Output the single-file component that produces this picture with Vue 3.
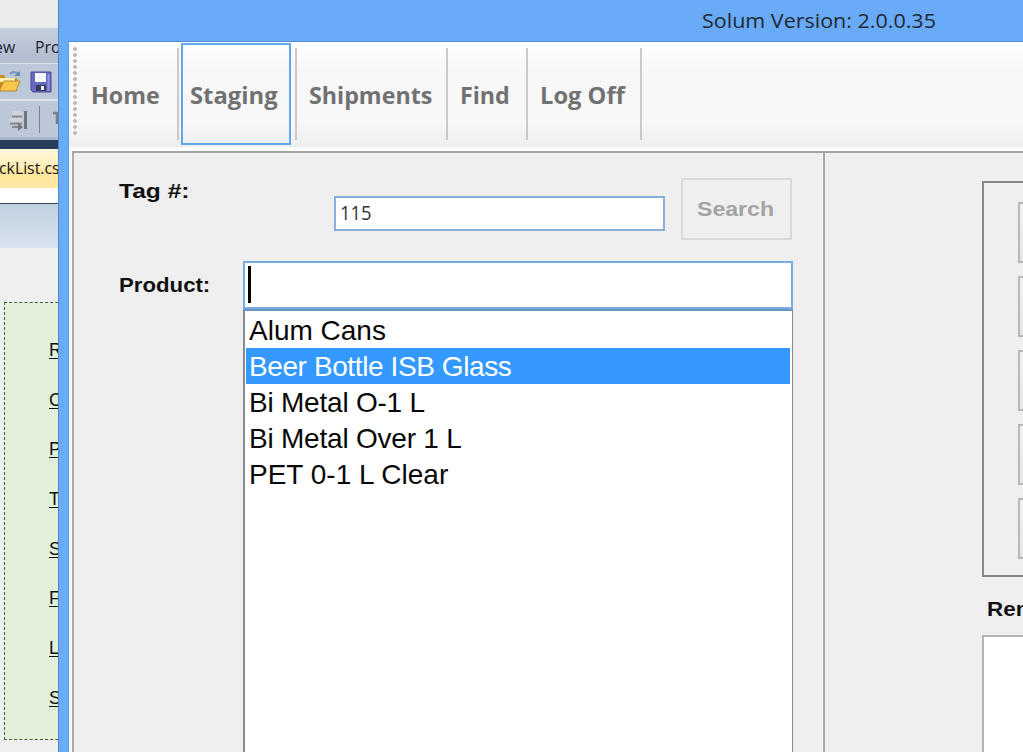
<script setup>
const tabs = [
  { label: 'Home', cls: 'home' },
  { label: 'Staging', cls: 'staging' },
  { label: 'Shipments', cls: 'shipments' },
  { label: 'Find', cls: 'find' },
  { label: 'Log Off', cls: 'logoff' },
]
const products = [
  { name: 'Alum Cans' },
  { name: 'Beer Bottle ISB Glass', cls: 'selected' },
  { name: 'Bi Metal O-1 L', cls: 'tight' },
  { name: 'Bi Metal Over 1 L', cls: 'tight' },
  { name: 'PET 0-1 L Clear' },
]
const links = ['R', 'C', 'P', 'T', 'S', 'F', 'L', 'S']
</script>

<template>
  <div class="desktop">
    <aside class="editor">
      <div class="editor-title"></div>
      <div class="editor-menu"><span class="m1">ew</span><span class="m2">Pro</span></div>
      <div class="editor-bar bar1">
        <svg width="58" height="34" viewBox="0 0 58 34">
          <path d="M0 11H4L6 14H17V27H0Z" fill="#c98f24" />
          <path d="M0 14H15V18H0Z" fill="#fff0b0" />
          <path d="M4 17H20L16 27H0V25Z" fill="#f7c54b" stroke="#a87820" stroke-width=".8" />
          <path d="M10 10Q14 6 18 10" fill="none" stroke="#7897bd" stroke-width="2" />
          <path d="M14 12H20V7Z" fill="#6988b3" />
          <path d="M31 8H51V28H33L31 26Z" fill="#6668bd" stroke="#484d9c" />
          <path d="M35 9H46V18H35Z" fill="#f6f6ff" />
          <path d="M36 21H46V27H36Z" fill="#343a62" />
          <path d="M41 22H44V26H41Z" fill="#f0f1f4" />
          <path d="M48.5 10V27" stroke="#9296e2" stroke-width="2" />
        </svg>
      </div>
      <div class="editor-bar bar2">
        <svg width="58" height="36" viewBox="0 0 58 36">
          <path d="M25.500 10V28" stroke="#72777f" stroke-width="3" />
          <path d="M12 10H22V15H12ZM10 17H22V22H10Z" fill="#d0d3d8" />
          <path d="M12 15.500H22M10 22.500H22M12 26H20" stroke="#858a92" stroke-width="2" />
          <path d="M18 22L23 26L18 30Z" fill="#72777f" />
          <path d="M39.500 5V32" stroke="#7b8492" />
          <path d="M53 12H58M57 12V23" stroke="#7b7f86" stroke-width="2.500" />
        </svg>
      </div>
      <div class="navy"></div>
      <div class="file-tab"><span>ckList.cs</span></div>
      <div class="white-strip"></div>
      <div class="blue-strip"></div>
      <div class="link-panel">
        <span v-for="(l, i) in links" :key="i">{{ l }}</span>
      </div>
    </aside>
    <main class="window">
      <header class="titlebar"><span>Solum Version: 2.0.0.35</span></header>
      <div class="client">
        <nav class="toolbar">
          <i class="grip"></i>
          <div v-for="t in tabs" :key="t.label" class="tab" :class="t.cls"><span>{{ t.label }}</span></div>
        </nav>
        <div class="panels">
          <section class="left">
            <div class="tag-row">
              <label><b class="tag">Tag #:</b></label>
              <div class="input"><span>115</span></div>
              <button><b>Search</b></button>
            </div>
            <div class="product-row">
              <label><b class="prod">Product:</b></label>
              <div class="combo">
                <div class="entry"><i></i></div>
                <ul>
                  <li v-for="p in products" :key="p.name" :class="p.cls">{{ p.name }}</li>
                </ul>
              </div>
            </div>
          </section>
          <section class="right">
            <div class="group"><i v-for="n in 5" :key="n"></i></div>
            <div class="remarks"><b>Rem</b></div>
            <div class="note"></div>
          </section>
        </div>
      </div>
    </main>
  </div>
</template>

<style>
html, body { margin: 0; overflow: hidden; }
</style>
<style scoped>
* { box-sizing: border-box; }
.desktop { display: grid; grid-template-columns: 58px 965px; width: 1023px; height: 752px; overflow: hidden; font-family: "Liberation Sans", Arial, sans-serif; }
span, b { display: inline-block; white-space: nowrap; transform-origin: 0 50%; }
.editor { overflow: hidden; background: #efefef; display: flex; flex-direction: column; }
.editor > div { flex: none; }
.editor-title { height: 28px; background: #ebebeb; }
.editor-menu { height: 35px; background: linear-gradient(#c5cedc, #b0bbcd); font: 17px/37px "Open Sans", sans-serif; color: #1c2230; display: flex; }
.m1 { flex: none; width: 36px; margin-left: -6px; transform: scaleX(.93); }
.m2 { margin-left: 5px; transform: scaleX(.93); }
.editor-bar svg { display: block; }
.bar1 { height: 36px; background: #bcc7d8; border-top: 1px solid #dce2eb; }
.bar2 { height: 41px; background: #bcc7d8; border-top: 2px solid #dbe1e9; border-bottom: 3px solid #a9b6c9; }
.navy { height: 9px; background: #2b3d5d; }
.file-tab { height: 39px; background: linear-gradient(#fff8df, #ffeeb5 48%, #ffe69b 52%, #ffe8a6); font: 17px/38px "Open Sans", sans-serif; color: #151515; }
.file-tab span { margin-left: -1px; transform: scaleX(.93); }
.white-strip { height: 16px; background: #fff; border-bottom: 1px solid #34435c; }
.blue-strip { height: 44px; background: linear-gradient(#bfd0df, #d9e4ef); }
.link-panel { margin: 54px 0 0 4px; width: 80px; height: 438px; border: 1px dashed #4c6343; background: #e2efd9; padding: 37px 0 0 44px; display: flex; flex-direction: column; }
.link-panel span { flex: none; height: 49.7px; font-size: 18px; line-height: 20px; text-decoration: underline; text-decoration-thickness: 1px; text-underline-offset: 2px; color: #111; }
.window { background: #6aabf7; display: flex; flex-direction: column; border-left: 1px solid #5289ca; }
.titlebar { height: 41px; padding-left: 643px; font: 20px/42px "Open Sans", sans-serif; color: #202832; }
.titlebar span { transform: scaleX(1.075); }
.client { height: 711px; margin-left: 9px; border-top: 1px solid #508dd4; border-left: 1px solid #5a9ae8; background: #f7f7f7; }
.toolbar { height: 109px; display: flex; padding-top: 2px; background: linear-gradient(#fff, #f8f8f8 25%, #f7f7f7 75%, #eee 96%, #fff 97%); }
.grip { width: 4px; height: 89px; margin: 3px 0 0 4px; background: radial-gradient(circle at 2px 2px, #bcbcbc 1.6px, transparent 2px) 0 0 / 4px 6px; }
.tab { height: 92px; margin-top: 4px; border-right: 2px solid #c9c9c9; font: 700 23px/94px "Open Sans", sans-serif; color: #717171; }
.tab span { transform: scaleX(1.01); }
.home { width: 102px; padding-left: 14px; }
.staging { width: 110px; height: 102px; margin: -1px 4px 0 2px; padding-left: 7px; border: 2px solid #5fa8ef; line-height: 101px; }
.staging span { transform: scaleX(1.035); }
.shipments { width: 153px; padding-left: 12px; border-left: 2px solid #c9c9c9; }
.find { width: 80px; padding-left: 12px; }
.logoff { width: 114px; padding-left: 12px; }
.logoff span { transform: scaleX(1.03); }
.panels { display: flex; height: 601px; margin-left: 3px; border-left: 2px solid #aaa; border-top: 2px solid #a4a4a4; background: #efefef; }
.left { width: 752px; border-right: 2px solid #a5a5a5; padding: 25px 0 0 45px; box-shadow: inset -1px 0 #fafafa; }
.tag-row { display: flex; height: 83px; }
.tag-row label { width: 215px; font-size: 21px; line-height: 26px; }
label { color: #111; }
.tag { transform: scaleX(1.17); }
.input { width: 331px; height: 35px; margin-top: 18px; border: 2px solid #88aedb; background: #fff; padding-left: 4px; font: 20px/29px "Open Sans", sans-serif; color: #333; }
.input span { transform: scaleX(.92); }
button { width: 111px; height: 62px; margin-left: 16px; padding: 0 0 0 14px; border: 2px solid #d9d9d9; background: #efefef; color: #a4a4a4; font: 700 21px/58px "Liberation Sans", sans-serif; text-align: left; }
button b { transform: scaleX(1.1); }
.product-row { display: flex; }
.product-row label { width: 124px; font-size: 20px; line-height: 49px; }
.prod { transform: scaleX(1.11); }
.combo { width: 550px; height: 500px; }
.entry { height: 48px; border: 2px solid #78ace5; background: #fff; padding: 3px 0 0 3px; }
.entry i { display: block; width: 3px; height: 37px; background: #000; }
ul { margin: 0; padding: 1px 2px 0 1px; height: 490px; list-style: none; background: #fff; border: 2px solid #858b94; border-width: 2px 1px 0 2px; border-top-color: #6b93bd; }
li { height: 36px; padding-left: 3px; font-size: 28px; line-height: 37px; color: #080808; white-space: nowrap; }
.selected { background: #3399ff; color: #fff; letter-spacing: -.4px; }
.tight { letter-spacing: -.22px; }
.right { flex: none; width: 198px; padding-top: 28px; padding-left: 157px; overflow: hidden; }
.group { width: 190px; height: 396px; border: 2px solid #858585; padding: 19px 0 0 34px; display: flex; flex-direction: column; gap: 13px; }
.group i { height: 61px; flex: none; border: 2px solid #b8b8b8; background: linear-gradient(#f2f2f2, #e6e6e6); }
.remarks { height: 58px; padding-left: 5px; font-size: 20px; line-height: 64px; color: #111; }
.remarks b { transform: scaleX(1.12); }
.note { width: 190px; height: 200px; background: #fff; border: 2px solid #b3b3b3; }
</style>
